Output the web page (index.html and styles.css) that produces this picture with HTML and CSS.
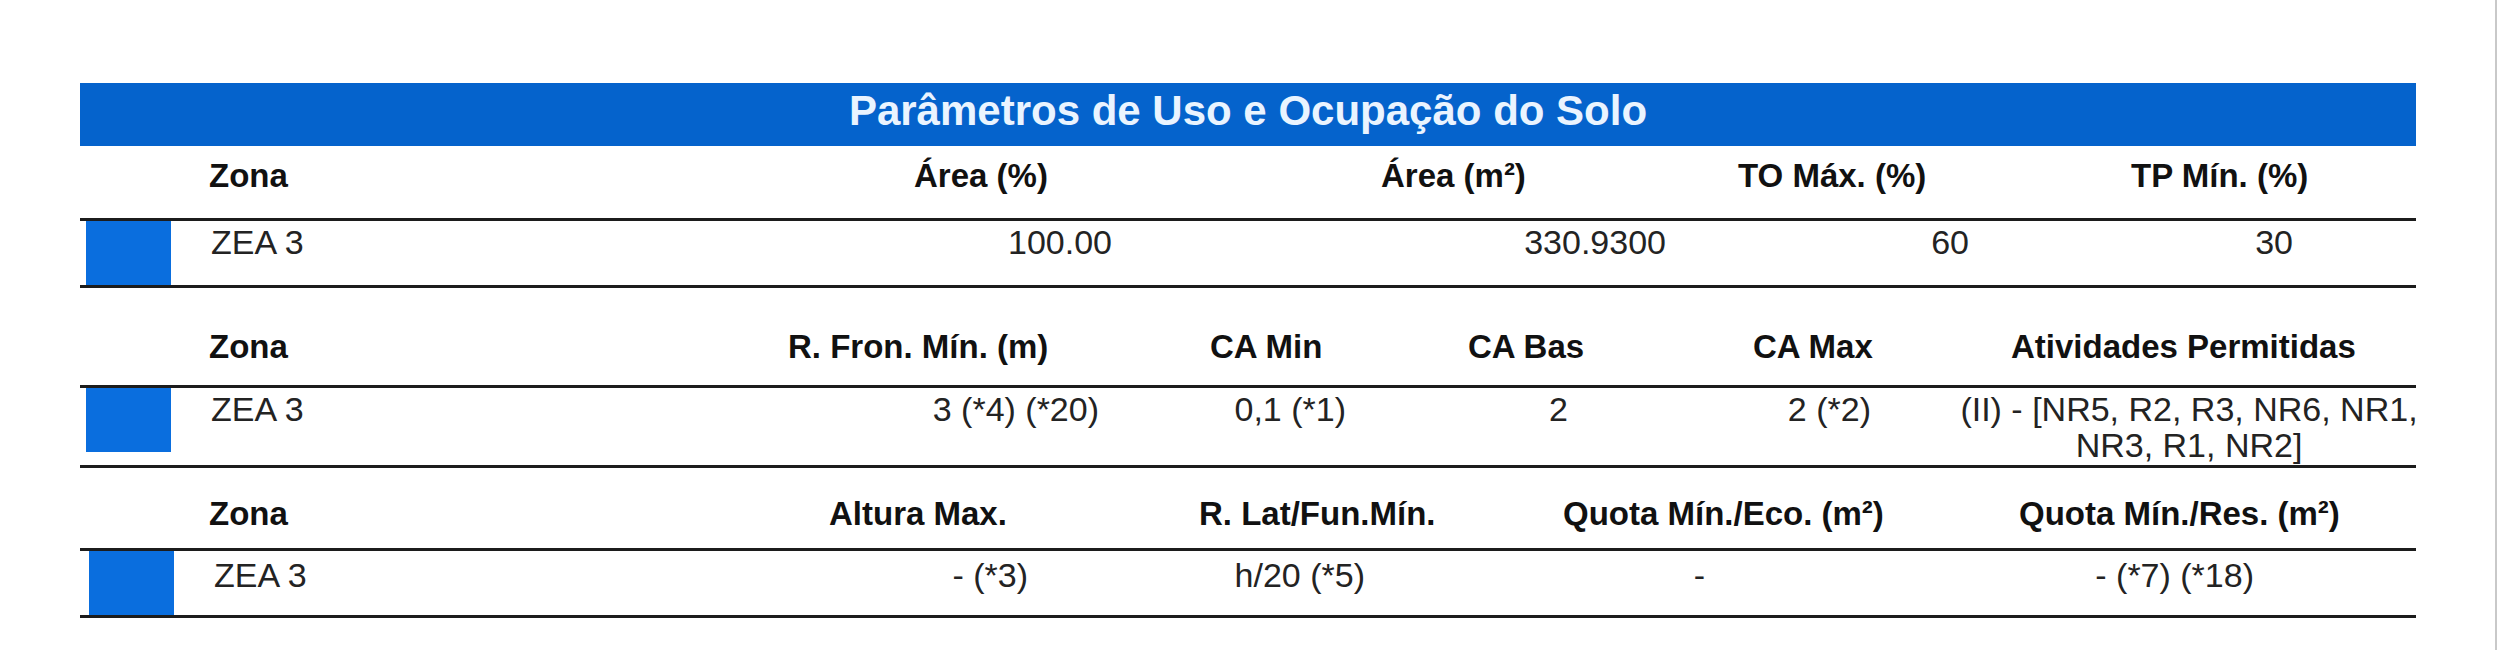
FILE: index.html
```html
<!DOCTYPE html>
<html lang="pt-BR">
<head>
<meta charset="utf-8">
<title>Parâmetros de Uso e Ocupação do Solo</title>
<link rel="stylesheet" href="styles.css">
</head>
<body>
<div class="page">
  <div class="sheet">
    <div class="title">Parâmetros de Uso e Ocupação do Solo</div>

    <section class="block">
      <div class="hdr h1">
        <span>Zona</span>
        <span>Área (%)</span>
        <span>Área (m²)</span>
        <span>TO Máx. (%)</span>
        <span>TP Mín. (%)</span>
      </div>
      <div class="row r1">
        <span class="sw-cell"><i class="swatch"></i></span>
        <span class="c zona">ZEA 3</span>
        <span class="c num">100.00</span>
        <span class="c num">330.9300</span>
        <span class="c num">60</span>
        <span class="c num">30</span>
      </div>
    </section>

    <section class="block">
      <div class="hdr h2">
        <span>Zona</span>
        <span>R. Fron. Mín. (m)</span>
        <span>CA Min</span>
        <span>CA Bas</span>
        <span>CA Max</span>
        <span>Atividades Permitidas</span>
      </div>
      <div class="row r2">
        <span class="sw-cell"><i class="swatch"></i></span>
        <span class="c zona">ZEA 3</span>
        <span class="c num">3 (*4) (*20)</span>
        <span class="c num">0,1 (*1)</span>
        <span class="c num">2</span>
        <span class="c num">2 (*2)</span>
        <span class="c acts">(II) - [NR5, R2, R3, NR6, NR1, NR3, R1, NR2]</span>
      </div>
    </section>

    <section class="block">
      <div class="hdr h3">
        <span>Zona</span>
        <span>Altura Max.</span>
        <span>R. Lat/Fun.Mín.</span>
        <span>Quota Mín./Eco. (m²)</span>
        <span>Quota Mín./Res. (m²)</span>
      </div>
      <div class="row r3">
        <span class="sw-cell"><i class="swatch"></i></span>
        <span class="c zona">ZEA 3</span>
        <span class="c num">- (*3)</span>
        <span class="c num">h/20 (*5)</span>
        <span class="c num">-</span>
        <span class="c num">- (*7) (*18)</span>
      </div>
    </section>
  </div>
</div>
</body>
</html>
```

FILE: styles.css
```css
html, body {
  margin: 0;
  padding: 0;
  background: #ffffff;
}

body {
  font-family: "Liberation Sans", Arial, sans-serif;
}

.page {
  box-sizing: border-box;
  width: 2497px;
  height: 650px;
  border-right: 2px solid #c9c9c9;
  overflow: hidden;
}

.sheet {
  width: 2336px;
  margin-left: 80px;
  padding-top: 83px;
}

.title {
  background: #0563cc;
  color: #eaf4ff;
  font-weight: bold;
  font-size: 42px;
  line-height: 55px;
  padding-bottom: 8px;
  text-align: center;
  white-space: nowrap;
}

.hdr {
  display: grid;
  padding-left: 129px;
  font-weight: bold;
  font-size: 33px;
  line-height: 38px;
  color: #111111;
  border-bottom: 3px solid #1c1c1c;
  white-space: nowrap;
}

.h1 {
  grid-template-columns: 705px 467px 357px 393px 1fr;
  padding-top: 11px;
  padding-bottom: 23px;
}

.h2 {
  grid-template-columns: 579px 422px 258px 285px 258px 1fr;
  padding-top: 40px;
  padding-bottom: 19px;
}

.h3 {
  grid-template-columns: 620px 370px 364px 456px 1fr;
  padding-top: 27px;
  padding-bottom: 15px;
}

.row {
  display: grid;
  align-items: start;
  font-size: 34px;
  line-height: 36px;
  color: #232323;
  border-bottom: 3px solid #1c1c1c;
}

.r1 {
  grid-template-columns: 131px 400px 501px 554px 303px 324px 1fr;
}

.r2 {
  grid-template-columns: 131px 400px 488px 247px 222px 303px 551px;
}

.r3 {
  padding-left: 3px;
  grid-template-columns: 131px 400px 414px 337px 340px 549px 1fr;
}

.sw-cell {
  display: block;
  height: 64px;
}

.swatch {
  display: block;
  width: 85px;
  height: 64px;
  margin-left: 6px;
  background: #0a6ede;
}

.r1 .c, .r2 .c {
  padding-top: 3px;
}

.r3 .c {
  padding-top: 6px;
}

.zona {
  text-align: left;
  white-space: nowrap;
}

.num {
  text-align: right;
  white-space: nowrap;
}

.acts {
  box-sizing: border-box;
  padding-left: 85px;
  padding-bottom: 2px;
  text-align: center;
}
```
